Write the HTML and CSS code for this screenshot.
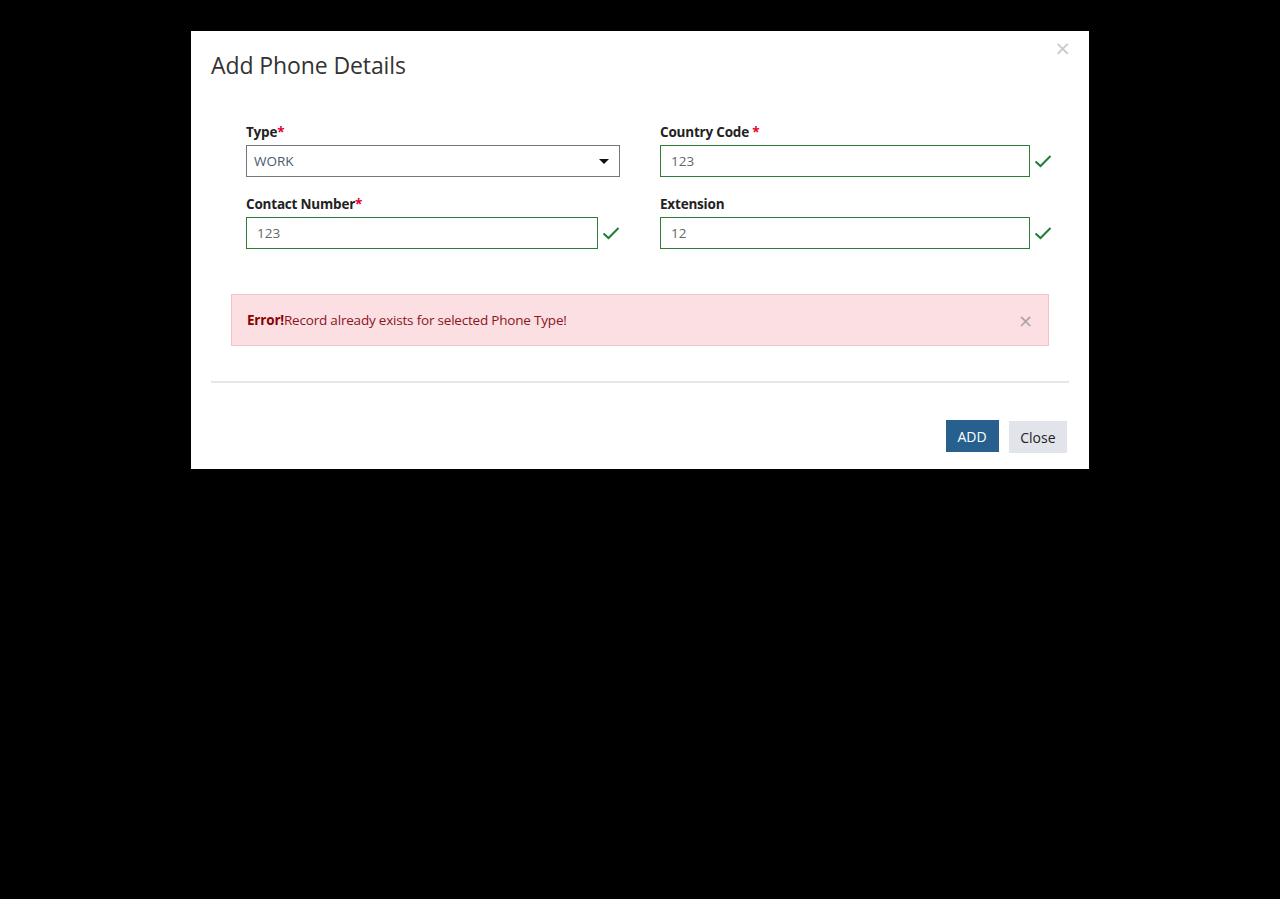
FILE: index.html
```html
<!DOCTYPE html>
<html>
<head>
<meta charset="utf-8">
<link rel="stylesheet" href="styles.css">
</head>
<body>
<div class="modal">
  <button class="modal-close" aria-label="Close">&times;</button>
  <h2 class="modal-title">Add Phone Details</h2>
  <div class="form-grid">
    <div class="field">
      <label class="label">Type<span class="req">*</span></label>
      <div class="control">
        <div class="select"><span>WORK</span><span class="caret"></span></div>
      </div>
    </div>
    <div class="field">
      <label class="label">Country Code <span class="req">*</span></label>
      <div class="control">
        <div class="input valid">123</div>
        <svg class="check" width="18" height="14" viewBox="0 0 18 14"><path d="M1.5 7.5 L6.5 12 L16.5 2" fill="none" stroke="#1e7e34" stroke-width="2"/></svg>
      </div>
    </div>
    <div class="field">
      <label class="label">Contact Number<span class="req">*</span></label>
      <div class="control">
        <div class="input valid">123</div>
        <svg class="check" width="18" height="14" viewBox="0 0 18 14"><path d="M1.5 7.5 L6.5 12 L16.5 2" fill="none" stroke="#1e7e34" stroke-width="2"/></svg>
      </div>
    </div>
    <div class="field">
      <label class="label">Extension</label>
      <div class="control">
        <div class="input valid">12</div>
        <svg class="check" width="18" height="14" viewBox="0 0 18 14"><path d="M1.5 7.5 L6.5 12 L16.5 2" fill="none" stroke="#1e7e34" stroke-width="2"/></svg>
      </div>
    </div>
  </div>
  <div class="alert">
    <span><strong>Error!</strong>Record already exists for selected Phone Type!</span>
    <span class="alert-close">&times;</span>
  </div>
  <hr class="divider">
  <div class="footer">
    <button class="btn btn-primary">ADD</button>
    <button class="btn btn-light">Close</button>
  </div>
</div>
</body>
</html>
```

FILE: styles.css
```css
html, body {
  margin: 0;
  padding: 0;
  background: #000;
  height: 100%;
}
body {
  font-family: "Open Sans", "Noto Sans", sans-serif;
  color: #333;
}
.modal {
  position: relative;
  width: 898px;
  height: 438px;
  margin: 31px 0 0 191px;
  background: #fff;
  box-sizing: border-box;
  padding: 18px 20px 0 20px;
}
.modal-close {
  position: absolute;
  top: 7px;
  right: 18px;
  border: none;
  background: none;
  padding: 0;
  font-size: 20px;
  line-height: 20px;
  color: #c8c8c8;
  font-family: "DejaVu Sans", sans-serif;
}
.modal-title {
  margin: 0;
  font-weight: 400;
  font-size: 23px;
  line-height: 32px;
  color: #333;
  letter-spacing: -0.1px;
}
.form-grid {
  display: grid;
  grid-template-columns: 374px 392px;
  column-gap: 40px;
  row-gap: 17px;
  margin: 41px 0 0 35px;
}
.label {
  display: block;
  font-size: 13.5px;
  font-weight: 700;
  color: #222;
  line-height: 20px;
  margin-bottom: 3px;
  letter-spacing: -0.2px;
}
.req {
  color: #e4002b;
}
.control {
  display: flex;
  align-items: center;
  gap: 4px;
}
.select {
  flex: 1;
  height: 32px;
  box-sizing: border-box;
  border: 1px solid #777;
  display: flex;
  align-items: center;
  justify-content: space-between;
  padding: 0 10px 0 7px;
  font-size: 13.5px;
  color: #4a5a6a;
}
.caret {
  width: 0;
  height: 0;
  border-left: 5px solid transparent;
  border-right: 5px solid transparent;
  border-top: 5px solid #111;
}
.input {
  flex: 1;
  height: 32px;
  box-sizing: border-box;
  border: 1px solid #777;
  display: flex;
  align-items: center;
  padding: 0 10px;
  font-size: 13.5px;
  color: #666;
}
.input.valid {
  border-color: #2e7d32;
}
.check {
  flex: none;
}
.alert {
  margin: 45px 20px 0 20px;
  height: 52px;
  box-sizing: border-box;
  background: #fbdfe3;
  border: 1px solid #f5c2c7;
  display: flex;
  align-items: center;
  justify-content: space-between;
  padding: 0 15px 0 15px;
  font-size: 13.5px;
  color: #8a1520;
  letter-spacing: -0.2px;
}
.alert strong {
  color: #8b0000;
}
.alert-close {
  font-family: "DejaVu Sans", sans-serif;
  font-size: 18px;
  color: #b0a0a3;
}
.divider {
  margin: 35px 0 0 0;
  border: none;
  border-top: 2px solid #e6e6e6;
}
.footer {
  display: flex;
  justify-content: flex-end;
  align-items: flex-start;
  gap: 10px;
  margin-top: 37px;
  padding-right: 2px;
}
.btn {
  border: none;
  font-family: "Open Sans", "Noto Sans", sans-serif;
  font-size: 14px;
  height: 32px;
  padding: 0 12px;
}
.btn-primary {
  background: #27608f;
  color: #fff;
}
.btn-light {
  background: #e1e5eb;
  color: #222;
  margin-top: 1px;
  padding: 0 11.5px;
}
```
